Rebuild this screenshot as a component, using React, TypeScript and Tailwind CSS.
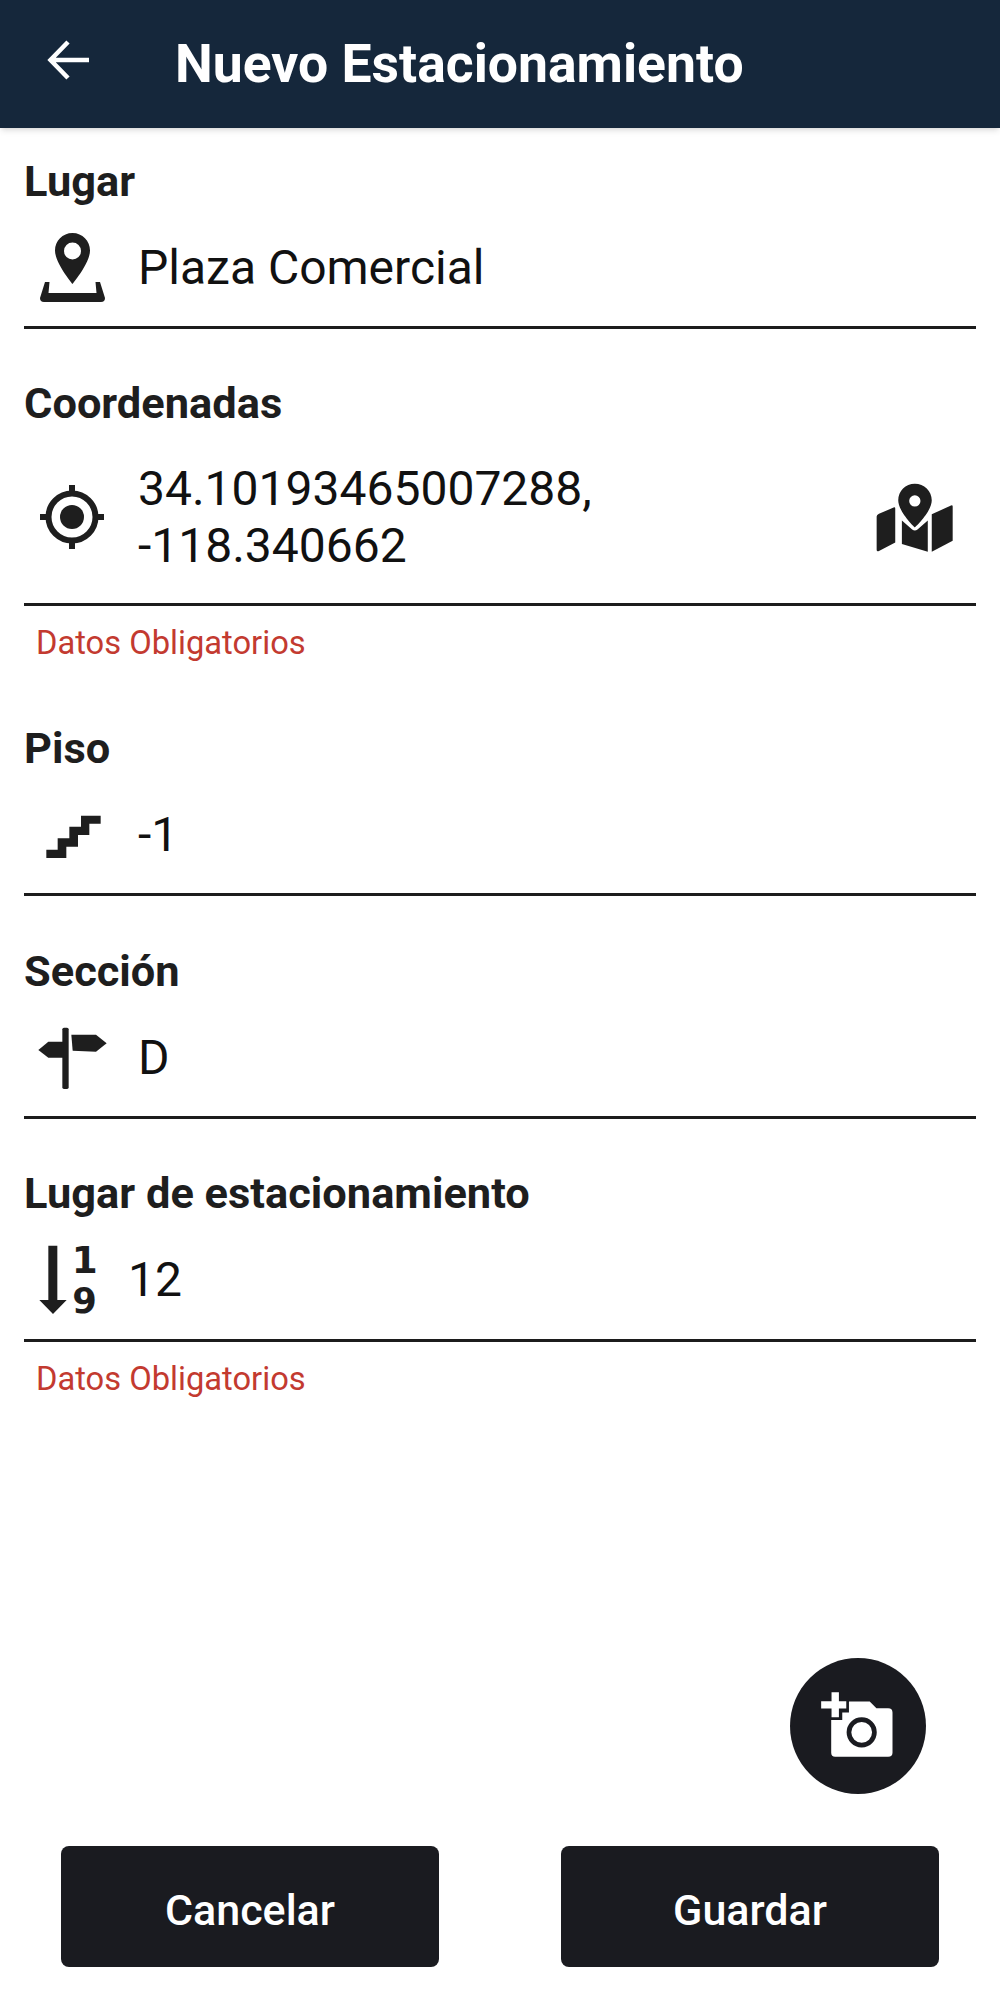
import React from "react";

function Row({ icon, children, right, h, gap = "ml-[30px]" }: { icon: React.ReactNode; children: React.ReactNode; right?: React.ReactNode; h: string; gap?: string }) {
  return (
    <div className={`flex items-center border-b-[3px] border-[#1c1c1c] pl-[12px] pt-[4px] ${h}`}>
      <div className="w-[72px] h-[72px] shrink-0">{icon}</div>
      <div className={`${gap} flex-1 text-[48px] leading-[57px] text-[#111111]`}>{children}</div>
      {right}
    </div>
  );
}

function Label({ children }: { children: React.ReactNode }) {
  return <div className="h-[48px] text-[43.4px] leading-[49px] font-bold text-[#1e1e1e]">{children}</div>;
}

function Err() {
  return <div className="h-[73px] pl-[12px] pt-[15px] text-[32.7px] leading-[44px] text-[#c33a30]">Datos Obligatorios</div>;
}

const fill = "#1e1e1e";

export default function App() {
  return (
    <div className="w-[1000px] h-[2000px] bg-white flex flex-col" style={{ fontFamily: "Roboto, sans-serif" }}>
      <header className="h-[128px] bg-[#15273b] flex items-center pl-[47px] shadow-md shrink-0">
        <svg width="44" height="44" viewBox="0 0 44 44" fill="none" stroke="white" strokeWidth="4.5" className="-mt-[8px]">
          <path d="M42 22H4M21 4L3.5 22L21 40" />
        </svg>
        <h1 className="ml-[84px] text-[53.5px] leading-[60px] font-bold text-white -mt-[1px]">Nuevo Estacionamiento</h1>
      </header>

      <main className="px-[24px] flex-1 flex flex-col pt-[29px]">
        <Label>Lugar</Label>
        <Row
          h="h-[124px]"
          icon={
            <svg viewBox="0 0 72 72" width="72" height="72" fill={fill}>
              <path fillRule="evenodd" d="M36.5 1C26.5 1 19 9 19 18.5C19 31 36.5 52 36.5 52C36.5 52 54 31 54 18.5C54 9 46.5 1 36.5 1ZM36.5 10.5a8.5 8.5 0 1 1 0 17a8.5 8.5 0 1 1 0-17Z" />
              <path d="M9 50L13.5 50L12.5 61H60.5L59.5 50L64 50L69 66Q69 70 65 70H8Q4 70 4 66Z" />
            </svg>
          }
        >
          Plaza Comercial
        </Row>

        <div className="h-[50px] shrink-0" />
        <Label>Coordenadas</Label>
        <Row
          h="h-[179px]"
          icon={
            <svg viewBox="0 0 72 72" width="72" height="72" fill="none" stroke={fill}>
              <circle cx="36" cy="36" r="23.5" strokeWidth="6" />
              <circle cx="36" cy="36" r="12" fill={fill} stroke="none" />
              <path d="M36 4V14M36 58V68M4 36H14M58 36H68" strokeWidth="6" />
            </svg>
          }
          right={
            <svg viewBox="100 60 250 230" width="83" height="77" fill={fill} className="mr-[20px] shrink-0">
              <path fillRule="evenodd" d="M226 73C198 73 176 95 176 123C176 158 226 205 226 205C226 205 277 158 277 123C277 95 254 73 226 73ZM226 108a17 17 0 1 1 0 34a17 17 0 1 1 0-34Z" />
              <path d="M118 164L162 145Q167 143 167 148V250L118 276Q111 279 111 272V172Q111 167 118 164Z" />
              <path d="M187 184L218 211Q226 217 234 211L265 184V278L187 255Z" />
              <path d="M277 165L335 139Q340 137 340 142V245L277 278Z" />
            </svg>
          }
        >
          <div>34.10193465007288,</div>
          <div>-118.340662</div>
        </Row>
        <Err />
        <div className="h-[45px] shrink-0" />

        <Label>Piso</Label>
        <Row
          h="h-[124px]"
          icon={
            <svg viewBox="108 60 216 216" width="72" height="72" fill={fill}>
              <path d="M139 212H173V178H208V143H243V110H302V134H268V168H234V203H199V237H139Z" />
            </svg>
          }
        >
          -1
        </Row>

        <div className="h-[51px] shrink-0" />
        <Label>Sección</Label>
        <Row
          h="h-[124px]"
          icon={
            <svg viewBox="108 726 216 216" width="72" height="72" fill={fill}>
              <rect x="187" y="743" width="19" height="184" rx="5" />
              <path d="M214 764H288L320 790L288 815L218 812Z" />
              <path d="M190 785H145L115 810L145 833H190Z" />
            </svg>
          }
        >
          D
        </Row>

        <div className="h-[50px] shrink-0" />
        <Label>Lugar de estacionamiento</Label>
        <Row
          h="h-[125px]"
          gap="ml-[20px]"
          icon={
            <svg viewBox="108 195 216 216" width="72" height="72" fill={fill} className="overflow-visible">
              <path d="M145 200H172V363H200L159 405L118 363H145Z" />
              <text x="254" y="282" textAnchor="middle" fontSize="112" fontWeight="700" fontFamily="'DejaVu Sans', sans-serif">1</text>
              <text x="254" y="403" textAnchor="middle" fontSize="106" fontWeight="700" fontFamily="'DejaVu Sans', sans-serif">9</text>
            </svg>
          }
        >
          <div className="-mt-[1px]">12</div>
        </Row>
        <Err />

        <div className="flex-1" />
        <div className="flex justify-end pr-[50px]">
          <svg viewBox="62 55 406 406" width="136" height="136">
            <circle cx="265" cy="258" r="203" fill="#1a1b20" />
            <path fill="white" d="M238 185H300L320 205H355Q368 205 368 218V338Q368 350 355 350H197Q185 350 185 338V240H218V218H238Z" />
            <path fill="white" d="M186 157H208V184H230V206H208V232H186V206H155V184H186Z" />
            <circle cx="276" cy="277" r="38" fill="white" stroke="#1a1b20" strokeWidth="14" />
          </svg>
        </div>
        <div className="flex justify-between px-[37px] mt-[52px] mb-[33px]">
          <button className="w-[378px] h-[121px] rounded-[8px] bg-[#1a1b20] text-white text-[43px] font-medium pt-[7px]">Cancelar</button>
          <button className="w-[378px] h-[121px] rounded-[8px] bg-[#1a1b20] text-white text-[43px] font-medium pt-[7px]">Guardar</button>
        </div>
      </main>
    </div>
  );
}
